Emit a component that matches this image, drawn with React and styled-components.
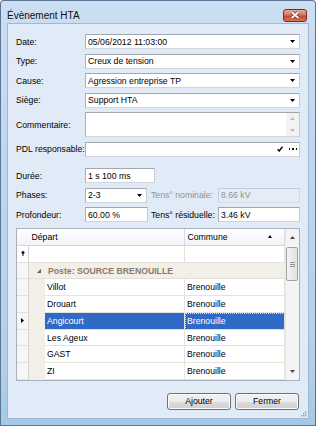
import React from "react";
import styled, { createGlobalStyle } from "styled-components";

const GlobalStyle = createGlobalStyle`
  html, body {
    margin: 0;
    padding: 0;
    background: #fff;
  }
  body {
    font-family: "Liberation Sans", Arial, sans-serif;
  }
`;

const Window = styled.div`
  box-sizing: border-box;
  width: 316px;
  height: 426px;
  border: 1px solid #5b7594;
  border-bottom-color: #3f86ad;
  border-radius: 4px 4px 0 0;
  background: linear-gradient(to bottom, #cbdef2 0%, #c0d6ed 40%, #b5cfe9 85%, #a2cae6 100%);
  padding: 0 6px 6px 6px;
  display: flex;
  flex-direction: column;
`;

const TitleBar = styled.div`
  box-sizing: border-box;
  height: 22px;
  padding-top: 6px;
  display: flex;
  align-items: center;
  justify-content: space-between;
`;

const Title = styled.div`
  font-size: 10px;
  color: #111;
  white-space: nowrap;
`;

const CloseButton = styled.div`
  box-sizing: border-box;
  width: 24px;
  height: 13px;
  margin-right: 2px;
  border: 1px solid #7a2a22;
  border-radius: 3px;
  background: linear-gradient(to bottom, #e8a79c 0%, #d77a68 45%, #c14a33 55%, #d7705a 100%);
  display: flex;
  align-items: center;
  justify-content: center;
`;

const Client = styled.div`
  position: relative;
  flex: 1;
  border: 1px solid #a3b8d0;
  background: #e1ebf8;
  padding: 10px 8px 8px 8px;
  display: flex;
  flex-direction: column;
`;

const Form = styled.div`
  display: grid;
  grid-template-columns: 69px 1fr;
  row-gap: 4.5px;
  align-items: center;
`;

const Measures = styled.div`
  display: grid;
  grid-template-columns: 69px 66px 67px 1fr;
  row-gap: 4.5px;
  align-items: center;
  margin-top: 11.5px;
`;

const Label = styled.div`
  font-size: 8.7px;
  color: ${(p) => (p.$disabled ? "#8e9297" : "#000")};
  white-space: nowrap;
`;

const Field = styled.div`
  box-sizing: border-box;
  height: ${(p) => p.$h || 15}px;
  width: ${(p) => (p.$w ? `${p.$w}px` : "auto")};
  justify-self: start;
  align-self: center;
  grid-column: ${(p) => (p.$span ? `span ${p.$span}` : "auto")};
  border: 1px solid;
  border-color: ${(p) =>
    p.$disabled ? "#c3cad4 #d3d9e0 #d8dee5 #c7ced8" : "#a2a7af #c6cad1 #d2d6dc #aab0b8"};
  background: ${(p) => (p.$disabled ? "#e5ecf6" : "#fff")};
  color: ${(p) => (p.$disabled ? "#8e9297" : "#000")};
  display: flex;
  align-items: center;
  padding-left: 2px;
  font-size: 8.7px;
  ${(p) => (p.$full ? "width: 100%; justify-self: stretch;" : "")}
`;

const FieldText = styled.span`
  flex: 1;
  white-space: nowrap;
  overflow: hidden;
`;

const ArrowSlot = styled.span`
  width: 13px;
  display: flex;
  align-items: center;
  justify-content: center;
`;

const Spin = styled.div`
  align-self: stretch;
  width: 13px;
  background: #f3f3f3;
  display: flex;
  flex-direction: column;
  justify-content: space-between;
  align-items: center;
  padding: 4px 0;
`;

const FieldTools = styled.span`
  display: flex;
  align-items: center;
  gap: 6px;
  padding-right: 2px;
`;

const Dots = styled.span`
  display: flex;
  gap: 2px;
  span {
    width: 1.5px;
    height: 1.5px;
    background: #111;
  }
`;

const GridBox = styled.div`
  box-sizing: border-box;
  height: 153px;
  margin-top: 6px;
  border: 1px solid #a7b0bb;
  background: #fff;
  display: flex;
  overflow: hidden;
  font-size: 8.7px;
`;

const Table = styled.div`
  width: 268px;
  display: flex;
  flex-direction: column;
`;

const Row = styled.div`
  box-sizing: border-box;
  display: grid;
  grid-template-columns: ${(p) => p.$cols};
  height: ${(p) => p.$h || 16.8}px;
`;

const HeaderCell = styled.div`
  box-sizing: border-box;
  display: flex;
  align-items: center;
  justify-content: space-between;
  padding: 0 12px 0 2.5px;
  background: linear-gradient(#ffffff, #f1f3f7);
  border-bottom: 1px solid #d3d7dd;
  border-right: 1px solid #dadde2;
`;

const Indicator = styled.div`
  box-sizing: border-box;
  display: flex;
  align-items: center;
  justify-content: center;
  background: ${(p) => (p.$light ? "#fff" : "#f6f6f6")};
  border-right: 1px solid #d4d4d4;
  border-bottom: 1px solid #e1e1e1;
`;

const Indent = styled.div`
  background: #f2efe9;
`;

const Cell = styled.div`
  box-sizing: border-box;
  display: flex;
  align-items: center;
  padding-left: 2px;
  white-space: nowrap;
  overflow: hidden;
  border-right: 1px solid #e6e3db;
  border-bottom: 1px solid #e6e3db;
  background: ${(p) => (p.$selected ? "#3169c6" : "#fff")};
  color: ${(p) => (p.$selected ? "#fff" : "#000")};
  ${(p) => (p.$focus ? "outline: 1px dotted #c9d8f2; outline-offset: -1px;" : "")}
`;

const GroupCell = styled.div`
  box-sizing: border-box;
  display: flex;
  align-items: center;
  gap: 7px;
  padding-left: 8px;
  background: #f2efe9;
  border-bottom: 1px solid #e3dfd6;
  color: #8c7a68;
  font-weight: bold;
  white-space: nowrap;
`;

const ScrollBar = styled.div`
  flex: 1;
  background: #f4f4f4;
  border-left: 1px solid #e8e8e8;
  display: flex;
  flex-direction: column;
`;

const ScrollArrow = styled.div`
  height: 17px;
  display: flex;
  align-items: center;
  justify-content: center;
`;

const Thumb = styled.div`
  box-sizing: border-box;
  height: 34px;
  margin: 1px 1px 0 0;
  border: 1px solid #9ea4ab;
  border-radius: 2px;
  background: linear-gradient(to right, #f4f4f4, #e0e0e0);
  display: flex;
  flex-direction: column;
  align-items: center;
  justify-content: center;
  gap: 1px;
  span {
    width: 5px;
    height: 1px;
    background: #8e949b;
  }
`;

const Buttons = styled.div`
  display: flex;
  justify-content: flex-end;
  gap: 4px;
  margin-top: 11.5px;
  padding-right: 1px;
`;

const Button = styled.div`
  box-sizing: border-box;
  width: 64px;
  height: 17px;
  border: 1px solid #707070;
  border-radius: 3px;
  box-shadow: inset 0 0 0 1px #fcfcfc;
  background: linear-gradient(to bottom, #f2f2f2 0%, #ebebeb 50%, #dddddd 51%, #cfcfcf 100%);
  font-size: 8.7px;
  color: #000;
  display: flex;
  align-items: center;
  justify-content: center;
`;

const Grip = styled.svg`
  position: absolute;
  right: 1px;
  bottom: 1px;
`;

const Tri = ({ dir = "down", color = "#000", w = 5, h = 3 }) => {
  const pts = {
    down: `0,0 ${w},0 ${w / 2},${h}`,
    up: `0,${h} ${w},${h} ${w / 2},0`,
    right: `0,0 ${w},${h / 2} 0,${h}`,
    corner: `${w},0 ${w},${h} 0,${h}`,
  }[dir];
  return (
    <svg width={w} height={h} viewBox={`0 0 ${w} ${h}`}>
      <polygon points={pts} fill={color} />
    </svg>
  );
};

const Combo = ({ value, ...rest }) => (
  <Field {...rest}>
    <FieldText>{value}</FieldText>
    <ArrowSlot>
      <Tri />
    </ArrowSlot>
  </Field>
);

const rows = [
  ["Villot", "Brenouille"],
  ["Drouart", "Brenouille"],
  ["Angicourt", "Brenouille", true],
  ["Les Ageux", "Brenouille"],
  ["GAST", "Brenouille"],
  ["ZI", "Brenouille"],
];

export default function App() {
  return (
    <>
      <GlobalStyle />
      <Window>
        <TitleBar>
          <Title>Évènement HTA</Title>
          <CloseButton>
            <svg width="10" height="8" viewBox="0 0 10 8">
              <path d="M1.5 1 L8.5 7 M8.5 1 L1.5 7" stroke="#6a2118" strokeWidth="3.2" />
              <path d="M1.5 1 L8.5 7 M8.5 1 L1.5 7" stroke="#fff" strokeWidth="1.8" />
            </svg>
          </CloseButton>
        </TitleBar>
        <Client>
          <Form>
            <Label>Date:</Label>
            <Combo $full value="05/06/2012 11:03:00" />
            <Label>Type:</Label>
            <Combo $full value="Creux de tension" />
            <Label>Cause:</Label>
            <Combo $full value="Agression entreprise TP" />
            <Label>Siège:</Label>
            <Combo $full value="Support HTA" />
            <Label>Commentaire:</Label>
            <Field $full $h={25}>
              <FieldText />
              <Spin>
                <Tri dir="up" color="#b9bdc2" />
                <Tri dir="down" color="#b9bdc2" />
              </Spin>
            </Field>
            <Label>PDL responsable:</Label>
            <Field $full>
              <FieldText />
              <FieldTools>
                <svg width="6" height="6" viewBox="0 0 6 6">
                  <path d="M0.6 3.2 L2.2 5 L5.5 0.7" stroke="#111" strokeWidth="1.5" fill="none" />
                </svg>
                <Dots>
                  <span />
                  <span />
                  <span />
                </Dots>
              </FieldTools>
            </Field>
          </Form>
          <Measures>
            <Label>Durée:</Label>
            <Field $w={70} $span={3}>
              <FieldText>1 s 100 ms</FieldText>
            </Field>
            <Label>Phases:</Label>
            <Combo $w={62} value="2-3" />
            <Label $disabled>Tens° nominale:</Label>
            <Field $full $disabled>
              <FieldText>8.66 kV</FieldText>
            </Field>
            <Label>Profondeur:</Label>
            <Field $w={63}>
              <FieldText>60.00 %</FieldText>
            </Field>
            <Label>Tens° résiduelle:</Label>
            <Field $full>
              <FieldText>3.46 kV</FieldText>
            </Field>
          </Measures>
          <GridBox>
            <Table>
              <Row $cols="12px 156px 100px" $h={17}>
                <HeaderCell />
                <HeaderCell>Départ</HeaderCell>
                <HeaderCell>
                  Commune
                  <Tri dir="up" w={4} h={3} />
                </HeaderCell>
              </Row>
              <Row $cols="12px 156px 100px">
                <Indicator $light>
                  <svg width="4" height="5" viewBox="0 0 4 5">
                    <circle cx="2" cy="1.6" r="1.5" fill="#111" />
                    <rect x="1.5" y="2.5" width="1" height="2.5" fill="#111" />
                  </svg>
                </Indicator>
                <Cell />
                <Cell />
              </Row>
              <Row $cols="12px 1fr">
                <Indicator />
                <GroupCell>
                  <Tri dir="corner" color="#5a5a5a" w={4} h={4} />
                  Poste: SOURCE BRENOUILLE
                </GroupCell>
              </Row>
              {rows.map(([depart, commune, sel]) => (
                <Row key={depart} $cols="12px 16px 140px 100px">
                  <Indicator>{sel && <Tri dir="right" w={3} h={5} />}</Indicator>
                  <Indent />
                  <Cell $selected={sel}>{depart}</Cell>
                  <Cell $selected={sel} $focus={sel}>
                    {commune}
                  </Cell>
                </Row>
              ))}
            </Table>
            <ScrollBar>
              <ScrollArrow>
                <Tri dir="up" color="#4a4a4a" />
              </ScrollArrow>
              <Thumb>
                <span />
                <span />
                <span />
              </Thumb>
              <div style={{ flex: 1 }} />
              <ScrollArrow>
                <Tri dir="down" color="#4a4a4a" />
              </ScrollArrow>
            </ScrollBar>
          </GridBox>
          <Buttons>
            <Button>Ajouter</Button>
            <Button>Fermer</Button>
          </Buttons>
          <Grip width="6" height="6" viewBox="0 0 6 6">
            {[
              [4, 0],
              [4, 2],
              [2, 2],
              [4, 4],
              [2, 4],
              [0, 4],
            ].map(([x, y]) => (
              <rect key={`${x}-${y}`} x={x} y={y} width="1.4" height="1.4" fill="#98a6b6" />
            ))}
          </Grip>
        </Client>
      </Window>
    </>
  );
}
